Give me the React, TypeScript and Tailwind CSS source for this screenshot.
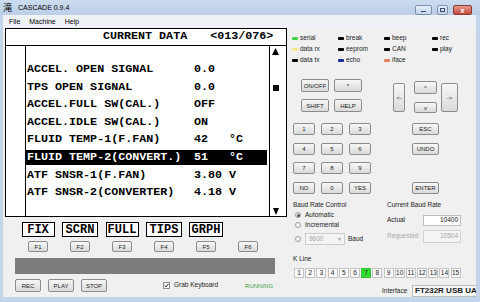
import React from "react";

type Row = { label: string; value: string; unit: string; on?: boolean };

const rows: Row[] = [
  { label: "ACCEL. OPEN SIGNAL", value: "0.0", unit: "" },
  { label: "TPS OPEN SIGNAL", value: "0.0", unit: "" },
  { label: "ACCEL.FULL SW(CAL.)", value: "OFF", unit: "" },
  { label: "ACCEL.IDLE SW(CAL.)", value: "ON", unit: "" },
  { label: "FLUID TEMP-1(F.FAN)", value: "42", unit: "°C" },
  { label: "FLUID TEMP-2(CONVERT.)", value: "51", unit: "°C", on: true },
  { label: "ATF SNSR-1(F.FAN)", value: "3.80", unit: "V" },
  { label: "ATF SNSR-2(CONVERTER)", value: "4.18", unit: "V" },
];

const fkeys = [
  { label: "FIX", w: "w-[33px]" },
  { label: "SCRN", w: "w-[36px]" },
  { label: "FULL", w: "w-[33px]" },
  { label: "TIPS", w: "w-[36px]" },
  { label: "GRPH", w: "w-[34px]" },
  { label: "", w: "" },
];

const leds: [string, string][] = [
  ["serial", "bg-[#3fd34a]"],
  ["break", "bg-black"],
  ["beep", "bg-black"],
  ["rec", "bg-black"],
  ["data rx", "bg-[#f1ed8c]"],
  ["eeprom", "bg-black"],
  ["CAN", "bg-black"],
  ["play", "bg-black"],
  ["data tx", "bg-black"],
  ["echo", "bg-[#1b2a9e]"],
  ["iface", "bg-[#e2845c]"],
];

const mono = "font-['Liberation_Mono',monospace] font-bold";

function Btn({ label, className }: { label: string; className: string }) {
  return (
    <div
      className={`flex items-center justify-center rounded-[2px] border border-[#8c8c8c] bg-linear-to-b from-[#f7f7f7] to-[#dadada] text-[6px] leading-none text-[#222] ${className}`}
    >
      {label}
    </div>
  );
}

function Radio({ on }: { on?: boolean }) {
  return (
    <span className="flex h-[6px] w-[6px] items-center justify-center rounded-full border border-[#9a9a9a] bg-[#f4f4f4]">
      {on && <span className="h-[3px] w-[3px] rounded-full bg-[#555]" />}
    </span>
  );
}

export default function App() {
  return (
    <div className="flex h-[302px] w-[480px] flex-col overflow-hidden bg-[#c3d5eb] font-['Liberation_Sans',Arial,sans-serif] text-black">
      {/* title bar */}
      <div className="flex h-[15px] items-center bg-linear-to-b from-[#cbdcef] to-[#bccfe7] pl-[3px]">
        <span className="w-[10px] font-['Noto_Sans_CJK_JP',sans-serif] text-[9px] leading-none">滝</span>
        <span className="ml-[5px] text-[7px] leading-none">CASCADE 0.9.4</span>
        <div className="mr-[8px] ml-auto flex gap-[5px] self-start pt-[5px]">
          <div className="flex h-[10px] w-[17px] items-center justify-center rounded-[2px] border border-[#7b90b0] bg-linear-to-b from-[#e6eef8] to-[#c4d4ea]">
            <span className="mt-[3px] h-[1px] w-[5px] bg-[#3b4d6a]" />
          </div>
          <div className="flex h-[10px] w-[11px] items-center justify-center rounded-[2px] border border-[#7b90b0] bg-linear-to-b from-[#e6eef8] to-[#c4d4ea]">
            <span className="h-[4px] w-[5px] border border-[#3b4d6a]" />
          </div>
          <div className="flex h-[10px] w-[19px] items-center justify-center rounded-[2px] border border-[#8e3b33] bg-linear-to-b from-[#e49a8f] to-[#c4463a] text-[7px] font-bold leading-none text-white">
            x
          </div>
        </div>
      </div>

      <div className="flex flex-1 flex-col pr-[4px] pb-[5px] pl-[3px]">
        {/* menu */}
        <div className="flex h-[13px] items-center gap-[9px] bg-[#eef2f7] pl-[6px] text-[7px] leading-none">
          <span>File</span>
          <span>Machine</span>
          <span>Help</span>
        </div>

        <div className="flex flex-1 bg-[#f0f0f0]">
          {/* left column */}
          <div className="flex w-[284px] flex-col">
            <div className={`ml-[2px] flex h-[189px] w-[282px] flex-col border border-black bg-white ${mono} text-[11.7px] leading-none`}>
              <div className="flex h-[17px] items-center border-b border-black pl-[97px]">
                <span>CURRENT DATA</span>
                <span className="ml-[23px]">&lt;013/076&gt;</span>
              </div>
              <div className="flex flex-1">
                <div className="w-[20px] border-r border-black" />
                <div className="flex flex-1 flex-col pt-[15px]">
                  {rows.map((r) => (
                    <div key={r.label} className="mr-[2px] flex h-[17.6px] items-center">
                      <div className={`flex h-[15px] w-full items-center pl-[1px] ${r.on ? "bg-black text-white" : ""}`}>
                        <span className="w-[167px] whitespace-pre">{r.label}</span>
                        <span className="w-[35px]">{r.value}</span>
                        <span>{r.unit}</span>
                      </div>
                    </div>
                  ))}
                </div>
                <div className="flex w-[17px] flex-col border-l border-black">
                  <svg className="mt-[2px] ml-[2px]" width="7" height="7" viewBox="0 0 7 7">
                    <path d="M3.5 0 L7 7 L0 7 Z" fill="#000" />
                  </svg>
                  <span className="mt-[30px] ml-[3px] h-[6px] w-[6px] bg-black" />
                  <svg className="mt-auto mb-[1px] ml-[3px]" width="6" height="7" viewBox="0 0 6 7">
                    <path d="M0 0 L6 0 L3 7 Z" fill="#000" />
                  </svg>
                </div>
              </div>
            </div>

            {/* F labels */}
            <div className="mt-[5px] ml-[14px] flex h-[15px]">
              {fkeys.map((f, i) => (
                <div key={i} className="flex w-[42px] justify-center">
                  {f.label && (
                    <div className={`flex h-[15px] items-center justify-center border border-black bg-white ${f.w} ${mono} text-[12px] leading-none`}>
                      {f.label}
                    </div>
                  )}
                </div>
              ))}
            </div>

            {/* F buttons */}
            <div className="mt-[4px] ml-[14px] flex h-[11px]">
              {fkeys.map((_, i) => (
                <div key={i} className="flex w-[42px] justify-center">
                  <Btn label={`F${i + 1}`} className="h-[11px] w-[20px]" />
                </div>
              ))}
            </div>

            <div className="mt-[6px] ml-[12px] h-[16px] w-[260px] bg-[#7c7c7c]" />

            {/* bottom controls */}
            <div className="mt-[5px] ml-[12px] flex h-[13px] items-center">
              <Btn label="REC" className="h-[13px] w-[26px]" />
              <Btn label="PLAY" className="ml-[7px] h-[13px] w-[26px]" />
              <Btn label="STOP" className="ml-[7px] h-[13px] w-[26px]" />
              <span className="ml-[56px] flex h-[7px] w-[7px] items-center justify-center border border-[#8e8f8f] bg-[#f8f8f8]">
                <svg width="5" height="5" viewBox="0 0 5 5">
                  <path d="M0.5 2.5 L2 4 L4.5 0.8" stroke="#333" strokeWidth="1" fill="none" />
                </svg>
              </span>
              <span className="ml-[4px] text-[6.5px] leading-none text-[#222]">Grab Keyboard</span>
              <span className="ml-[27px] text-[6px] leading-none text-[#3f9e3f]">RUNNING</span>
            </div>
          </div>

          {/* right column */}
          <div className="flex flex-1 flex-col overflow-hidden text-[6.5px] leading-none text-[#222]">
            <div className="mt-[5px] ml-[5px] grid auto-rows-[11px] grid-cols-[46px_46px_48px_40px]">
              {leds.map(([name, color]) => (
                <div key={name} className="flex items-center gap-[2px]">
                  <span className={`h-[3px] w-[6px] rounded-[1px] ${color}`} />
                  <span>{name}</span>
                </div>
              ))}
            </div>

            {/* control keys and arrows */}
            <div className="mt-[13px] flex h-[34px] items-start">
              <div className="ml-[14px] grid grid-cols-[28px_28px] gap-x-[5px] gap-y-[7px]">
                <Btn label="ON/OFF" className="h-[13px]" />
                <Btn label="*" className="h-[13px]" />
                <Btn label="SHIFT" className="h-[13px]" />
                <Btn label="HELP" className="h-[13px]" />
              </div>
              <Btn label="<-" className="mt-[4px] ml-[31px] h-[29px] w-[12px]" />
              <div className="ml-[9px] flex w-[23px] flex-col">
                <Btn label="^" className="mt-[2px] h-[13px]" />
                <Btn label="v" className="mt-[8px] h-[11px]" />
              </div>
              <Btn label="->" className="mt-[4px] ml-[4px] h-[29px] w-[17px]" />
            </div>

            {/* numpad */}
            <div className="mt-[10px] flex">
              <div className="ml-[6px] grid auto-rows-[12px] grid-cols-[22px_22px_22px] gap-x-[6px] gap-y-[7.7px]">
                {["1", "2", "3", "4", "5", "6", "7", "8", "9", "NO", "0", "YES"].map((k) => (
                  <Btn key={k} label={k} className="" />
                ))}
              </div>
              <div className="ml-[41px] grid w-[27px] auto-rows-[12px] gap-y-[7.7px]">
                <Btn label="ESC" className="" />
                <Btn label="UNDO" className="" />
                <div />
                <Btn label="ENTER" className="" />
              </div>
            </div>

            {/* baud rate */}
            <div className="mt-[6px] flex">
              <div className="ml-[6px] flex w-[88px] flex-col">
                <div className="flex h-[10px] items-center">Baud Rate Control</div>
                <div className="flex h-[10px] items-center gap-[4px] pl-[2px]">
                  <Radio on />
                  <span>Automatic</span>
                </div>
                <div className="flex h-[10px] items-center gap-[4px] pl-[2px]">
                  <Radio />
                  <span>Incremental</span>
                </div>
                <div className="mt-[3px] flex h-[12px] items-center gap-[4px] pl-[2px]">
                  <Radio />
                  <div className="flex h-[12px] w-[40px] items-center border border-[#cdcdcd] bg-[#f4f4f4] text-[#a3a3a3]">
                    <span className="pl-[3px]">9600</span>
                    <span className="ml-auto flex h-full w-[9px] items-center justify-center text-[6px]">▾</span>
                  </div>
                  <span className="-ml-[1px]">Baud</span>
                </div>
              </div>
              <div className="ml-[6px] flex flex-col">
                <div className="flex h-[10px] items-center">Current Baud Rate</div>
                <div className="mt-[5px] flex h-[11px] items-center">
                  <span className="w-[36px]">Actual</span>
                  <div className="flex h-[11px] w-[38px] items-center justify-end border border-[#bdbdbd] bg-white pr-[2px]">10400</div>
                </div>
                <div className="mt-[4px] flex h-[13px] items-center text-[#a7a7a7]">
                  <span className="w-[36px]">Requested</span>
                  <div className="flex h-[13px] w-[38px] items-center justify-end border border-[#d0d0d0] bg-[#f4f4f4] pr-[2px]">10504</div>
                </div>
              </div>
            </div>

            {/* K line */}
            <div className="mt-[9px] ml-[6px] flex h-[10px] items-center">K Line</div>
            <div className="mt-[4px] ml-[7px] flex h-[10px] gap-[1.2px]">
              {Array.from({ length: 15 }, (_, i) => (
                <div
                  key={i}
                  className={`flex h-[10px] w-[10px] items-center justify-center border ${i === 6 ? "border-[#2fc42f] bg-[#2fdc2f]" : "border-[#c4c4c4] bg-[#fafafa]"}`}
                >
                  {i + 1}
                </div>
              ))}
            </div>

            {/* interface */}
            <div className="mt-[7px] ml-[95px] flex h-[12px] items-center">
              <span className="w-[30px]">Interface</span>
              <div className="flex h-[12px] flex-1 items-center overflow-hidden border border-r-0 border-[#bdbdbd] bg-[#f7f7f7] pl-[2px] text-[8px] font-bold whitespace-nowrap">
                FT232R USB UART
              </div>
            </div>
          </div>
        </div>
      </div>
    </div>
  );
}
